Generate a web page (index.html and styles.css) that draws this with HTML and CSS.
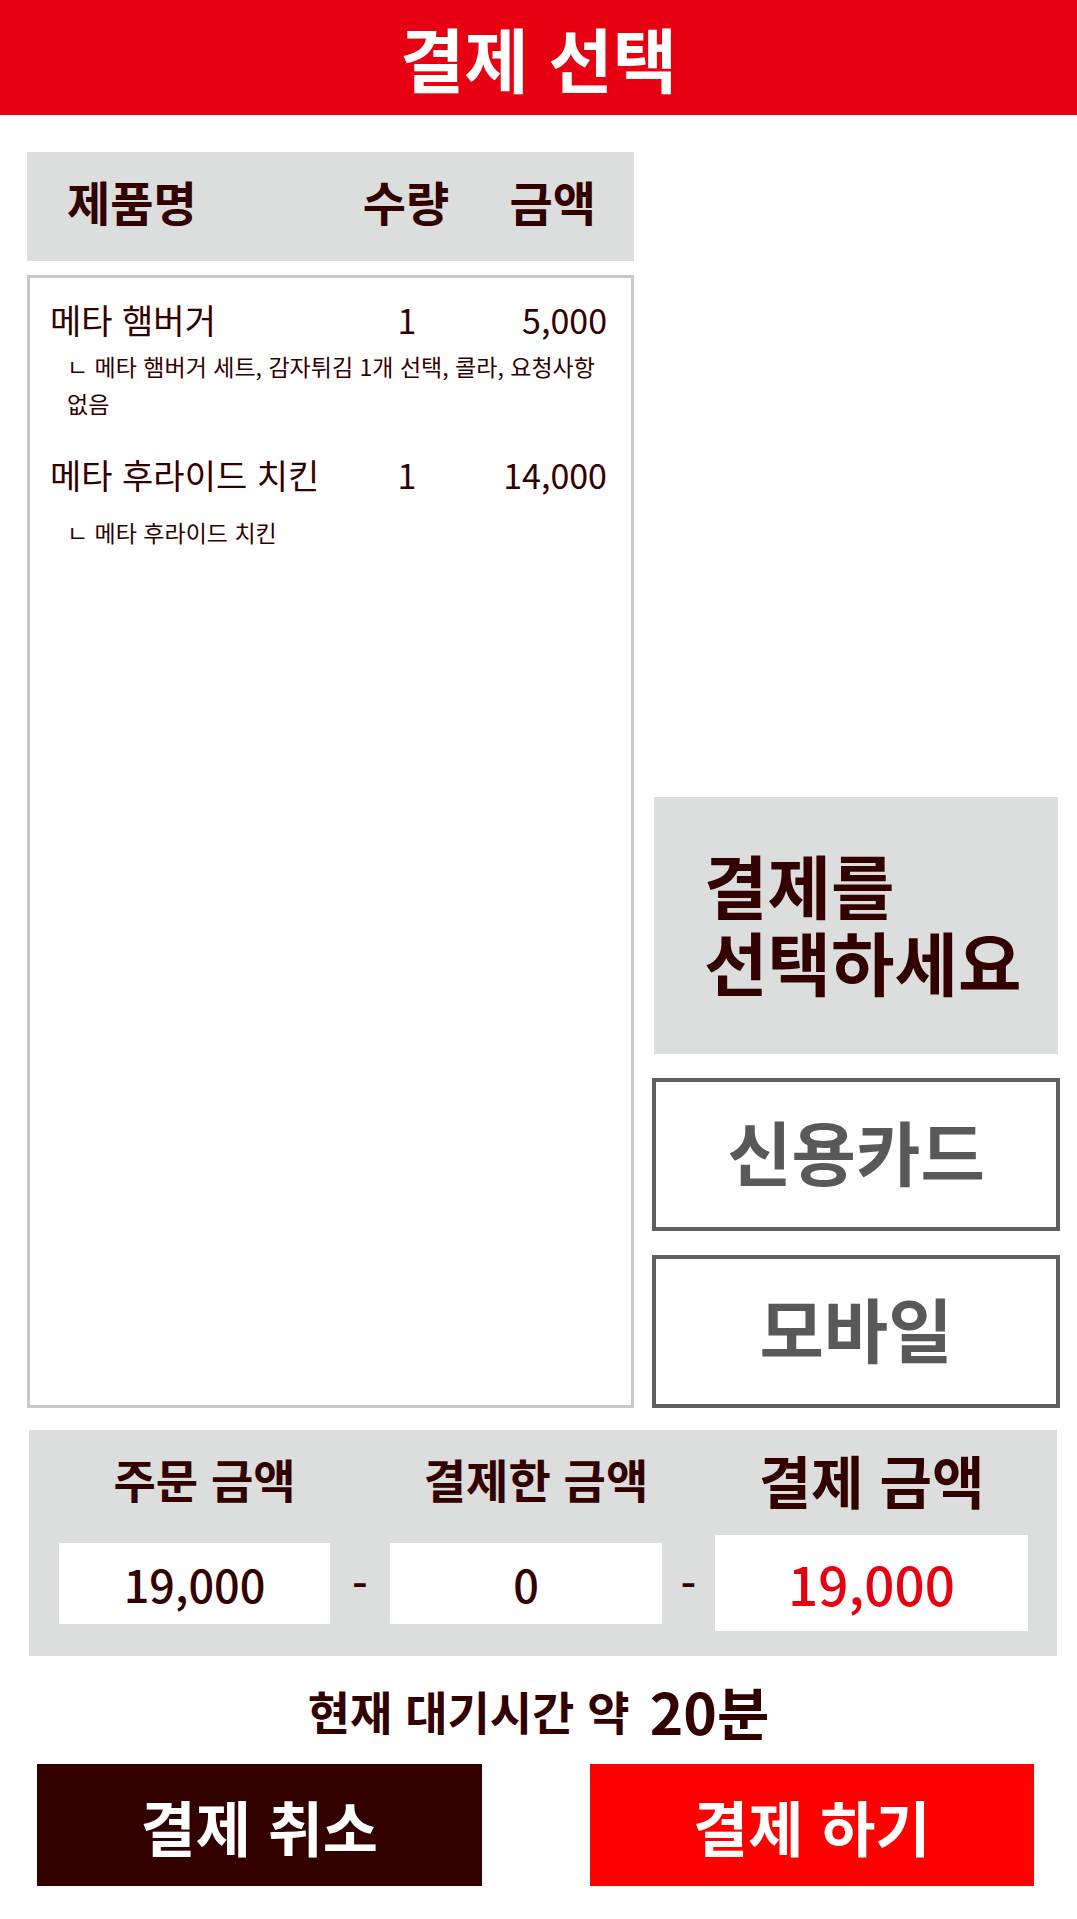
FILE: index.html
```html
<!DOCTYPE html>
<html lang="ko">
<head>
<meta charset="utf-8">
<title>결제 선택</title>
<link rel="stylesheet" href="styles.css">
</head>
<body>
<header class="topbar"><h1 class="title">결제 선택</h1></header>
<main class="main">
  <section class="order">
    <div class="order-head">
      <span class="col-name">제품명</span><span class="col-qty">수량</span><span class="col-amt">금액</span>
    </div>
    <div class="order-list">
      <div class="item">
        <div class="item-row"><span class="col-name">메타 햄버거</span><span class="col-qty">1</span><span class="col-amt">5,000</span></div>
        <p class="item-opt">ㄴ 메타 햄버거 세트, 감자튀김 1개 선택, 콜라, 요청사항 없음</p>
      </div>
      <div class="item">
        <div class="item-row"><span class="col-name">메타 후라이드 치킨</span><span class="col-qty">1</span><span class="col-amt">14,000</span></div>
        <p class="item-opt">ㄴ 메타 후라이드 치킨</p>
      </div>
    </div>
  </section>
  <aside class="pay">
    <div class="pay-prompt">결제를 선택하세요</div>
    <button class="pay-btn">신용카드</button>
    <button class="pay-btn">모바일</button>
  </aside>
</main>
<section class="summary">
  <div class="sum-label">주문 금액</div>
  <div class="sum-label sum-label-mid">결제한 금액</div>
  <div class="sum-label sum-label-main">결제 금액</div>
  <div class="sum-value">19,000</div>
  <div class="sum-op">-</div>
  <div class="sum-value">0</div>
  <div class="sum-op">-</div>
  <div class="sum-value sum-value-main">19,000</div>
</section>
<p class="wait"><span>현재 대기시간 약</span><strong class="wait-time">20분</strong></p>
<div class="actions">
  <button class="btn btn-cancel">결제 취소</button>
  <button class="btn btn-pay">결제 하기</button>
</div>
</body>
</html>
```
FILE: styles.css
```css
* { box-sizing: border-box; }
body {
  margin: 0;
  width: 1077px;
  font-family: "Noto Sans CJK KR", "Noto Sans", sans-serif;
  color: #330000;
  background: #fff;
  word-break: keep-all;
}
.topbar {
  height: 115px;
  background: #e60012;
  display: flex;
  align-items: center;
  justify-content: center;
}
.title {
  margin: 0;
  font-size: 70px;
  font-weight: 700;
  line-height: 1;
  color: #fff;
}
.main {
  display: flex;
  align-items: flex-end;
  gap: 18px;
  padding: 37px 17px 0 27px;
}
.order {
  width: 607px;
  display: flex;
  flex-direction: column;
  gap: 14px;
}
.order-head {
  height: 109px;
  background: #dcdddd;
  padding: 22px 38px 0 40px;
  display: grid;
  grid-template-columns: 1fr 100px 140px;
  align-items: start;
  font-size: 47px;
  font-weight: 700;
  line-height: 54px;
}
.col-qty { text-align: center; }
.col-amt { text-align: right; }
.order-list {
  height: 1133px;
  border: 3px solid #c8c8c8;
  padding: 20px 24px 0 20px;
}
.item + .item { margin-top: 31px; }
.item-row {
  display: grid;
  grid-template-columns: 1fr 100px 150px;
  font-size: 34px;
  line-height: 44px;
}
.item-opt {
  margin: 6px 0 0 17px;
  font-size: 23px;
  line-height: 37px;
}
.item:last-child .item-opt { margin-top: 17px; }
.pay {
  width: 408px;
  display: flex;
  flex-direction: column;
  gap: 24px;
}
.pay-prompt {
  margin: 0 2px;
  height: 257px;
  background: #dcdddd;
  padding: 0 0 6px 50px;
  display: flex;
  align-items: center;
  font-size: 69px;
  font-weight: 700;
  line-height: 77px;
}
.pay-btn {
  height: 153px;
  border: 4px solid #5f5f5f;
  background: #fff;
  font-family: inherit;
  font-size: 70px;
  font-weight: 700;
  color: #595959;
  padding: 0 0 8px;
}
.summary {
  margin: 22px 20px 0 29px;
  width: 1028px;
  background: #dcdddd;
  padding: 18px 29px 25px 30px;
  display: grid;
  grid-template-columns: 271px 60px 272px 53px 313px;
  grid-template-rows: 62px 96px;
  row-gap: 25px;
}
.sum-label {
  grid-column: 1;
  text-align: center;
  padding-left: 20px;
  font-size: 46px;
  font-weight: 700;
  line-height: 60px;
}
.sum-label-mid { grid-column: 3; }
.sum-label-main { grid-column: 5; padding-left: 0; font-size: 57px; line-height: 62px; }
.sum-value {
  align-self: center;
  height: 81px;
  background: #fff;
  display: flex;
  align-items: center;
  justify-content: center;
  font-size: 45px;
  font-weight: 500;
}
.sum-value-main {
  height: 96px;
  font-size: 53px;
  color: #e60012;
}
.sum-op {
  display: flex;
  align-items: center;
  justify-content: center;
  font-size: 44px;
  font-weight: 500;
}
.wait {
  margin: 0;
  height: 108px;
  display: flex;
  align-items: center;
  justify-content: center;
  gap: 20px;
  font-size: 46px;
  font-weight: 700;
}
.wait-time { font-size: 57px; font-weight: 700; }
.actions {
  display: flex;
  gap: 108px;
  padding: 0 43px 0 37px;
}
.btn {
  width: 445px;
  height: 122px;
  border: none;
  font-family: inherit;
  font-size: 60px;
  font-weight: 700;
  color: #fff;
}
.btn-cancel { background: #330000; }
.btn-pay { background: #ff0000; }
```
